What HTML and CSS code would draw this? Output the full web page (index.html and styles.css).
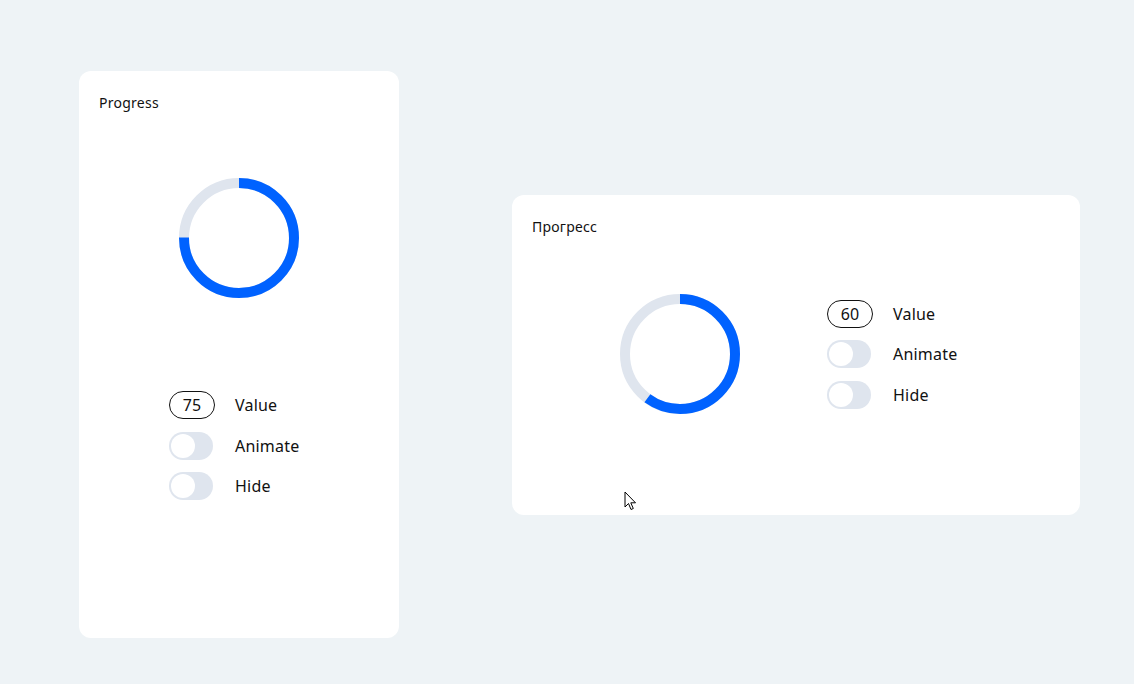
FILE: index.html
```html
<!DOCTYPE html>
<html>
<head>
<meta charset="utf-8">
<link rel="stylesheet" href="styles.css">
</head>
<body>
<div class="stage">
  <div class="card card-tall">
    <div class="title">Progress</div>
    <div class="ring-wrap">
      <svg class="ring" width="120" height="120" viewBox="0 0 120 120">
        <circle cx="60" cy="60" r="55" class="track"/>
        <circle cx="60" cy="60" r="55" class="bar" stroke-dasharray="259.18 345.58" transform="rotate(-90 60 60)"/>
      </svg>
    </div>
    <div class="controls">
      <div class="row"><div class="num">75</div><span class="label">Value</span></div>
      <div class="row"><div class="toggle"><span class="knob"></span></div><span class="label">Animate</span></div>
      <div class="row"><div class="toggle"><span class="knob"></span></div><span class="label">Hide</span></div>
    </div>
  </div>
  <div class="card card-wide">
    <div class="title">Прогресс</div>
    <div class="wide-body">
      <svg class="ring" width="120" height="120" viewBox="0 0 120 120">
        <circle cx="60" cy="60" r="55" class="track"/>
        <circle cx="60" cy="60" r="55" class="bar" stroke-dasharray="207.35 345.58" transform="rotate(-90 60 60)"/>
      </svg>
      <div class="controls">
        <div class="row"><div class="num">60</div><span class="label">Value</span></div>
        <div class="row"><div class="toggle"><span class="knob"></span></div><span class="label">Animate</span></div>
        <div class="row"><div class="toggle"><span class="knob"></span></div><span class="label">Hide</span></div>
      </div>
    </div>
    <svg class="cursor" width="14" height="21" viewBox="0 0 14 21">
      <path d="M1 1 L1 16 L4.5 12.5 L7 18.5 L9.3 17.5 L6.8 11.8 L11.5 11.8 Z" fill="#fff" stroke="#000" stroke-width="1" stroke-linejoin="miter"/>
    </svg>
  </div>
</div>
</body>
</html>
```
FILE: styles.css
```css
html, body {
  margin: 0;
  padding: 0;
}
body {
  background: #eef3f6;
  font-family: "Noto Sans", "Lato", sans-serif;
  color: #111;
  width: 1134px;
  height: 684px;
  overflow: hidden;
}
.stage {
  display: flex;
  align-items: flex-start;
  padding: 71px 0 0 79px;
  gap: 113px;
}
.card {
  background: #fff;
  border-radius: 12px;
  box-sizing: border-box;
  position: relative;
}
.card-tall {
  width: 320px;
  height: 567px;
  padding: 23px 20px 0 20px;
  display: flex;
  flex-direction: column;
}
.card-wide {
  width: 568px;
  height: 320px;
  margin-top: 124px;
  padding: 23px 20px 0 20px;
}
.title {
  font-size: 14px;
  line-height: 18px;
  letter-spacing: 0.25px;
  color: #111;
}
.ring-wrap {
  display: flex;
  justify-content: center;
  margin-top: 66px;
}
.ring {
  display: block;
}
.track {
  fill: none;
  stroke: #dfe5ee;
  stroke-width: 10;
}
.bar {
  fill: none;
  stroke: #0062ff;
  stroke-width: 10;
}
.card-tall .controls {
  margin-top: 93px;
  margin-left: 70px;
}
.controls {
  display: flex;
  flex-direction: column;
  gap: 12.5px;
}
.row {
  display: flex;
  align-items: center;
  height: 28px;
}
.num {
  width: 46px;
  height: 28px;
  box-sizing: border-box;
  border: 1px solid #111;
  border-radius: 14px;
  display: flex;
  align-items: center;
  justify-content: center;
  font-size: 16px;
  margin-right: 20px;
}
.toggle {
  width: 44px;
  height: 28px;
  border-radius: 14px;
  background: #dfe5ee;
  margin-right: 22px;
  position: relative;
}
.knob {
  position: absolute;
  left: 2px;
  top: 2px;
  width: 24px;
  height: 24px;
  border-radius: 50%;
  background: #fff;
}
.label {
  font-size: 16px;
  line-height: 20px;
  letter-spacing: 0.2px;
}
.wide-body {
  display: flex;
  align-items: center;
  margin-top: 58px;
  margin-left: 88px;
  gap: 87px;
}
.cursor {
  position: absolute;
  left: 112px;
  top: 296px;
}
```
